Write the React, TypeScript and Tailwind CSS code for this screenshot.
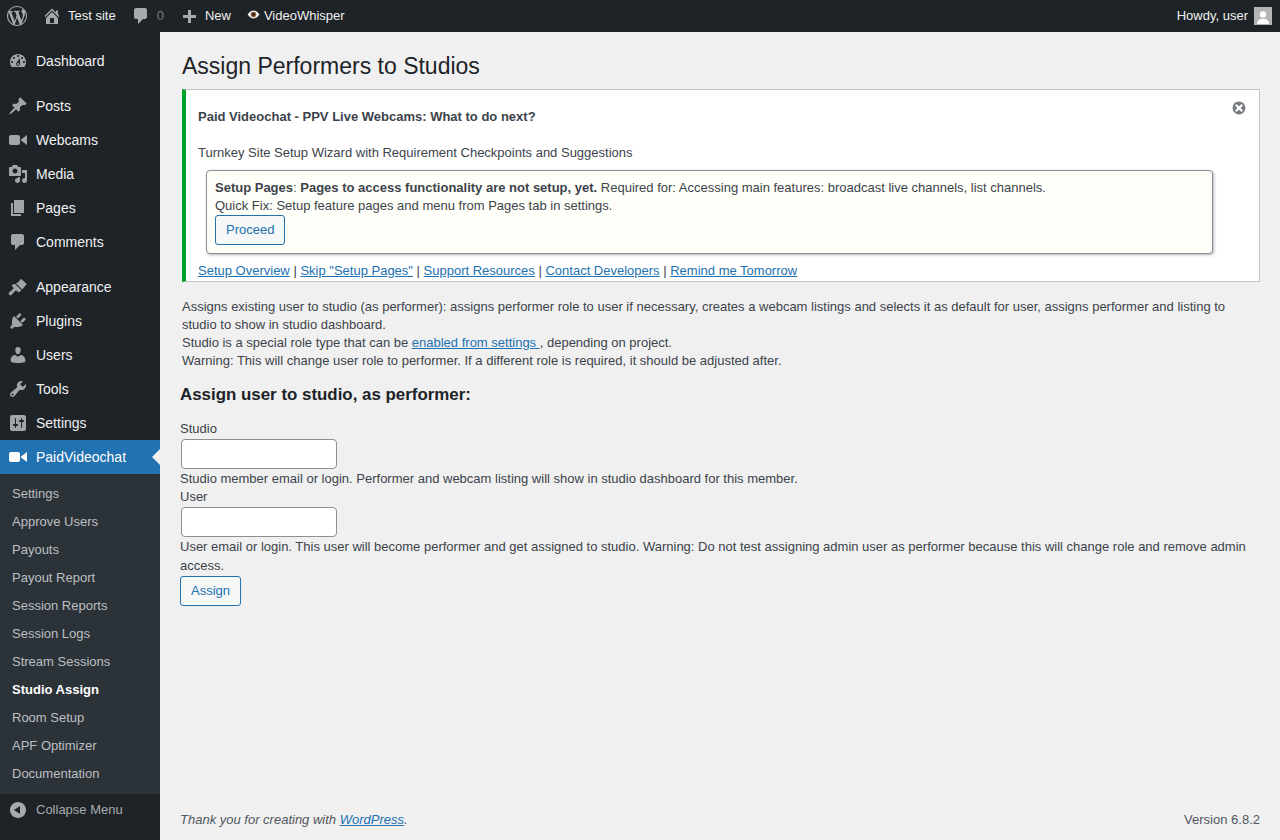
import React from "react";

const P: Record<string, string> = {
  wp: "M20 10c0-5.51-4.49-10-10-10C4.48 0 0 4.49 0 10c0 5.52 4.48 10 10 10 5.51 0 10-4.48 10-10zM7.78 15.37L4.37 6.22c.55-.02 1.17-.08 1.17-.08.5-.06.44-1.13-.06-1.11 0 0-1.45.11-2.37.11-.18 0-.37 0-.58-.01C4.12 2.69 6.87 1.11 10 1.11c2.33 0 4.45.87 6.05 2.34-.68-.11-1.65.39-1.65 1.58 0 .74.45 1.36.9 2.1.35.61.55 1.36.55 2.46 0 1.49-1.4 5-1.4 5l-3.03-8.37c.54-.02.82-.17.82-.17.5-.05.44-1.25-.06-1.22 0 0-1.44.12-2.38.12-.87 0-2.33-.12-2.33-.12-.5-.03-.56 1.2-.06 1.22l.92.08 1.26 3.41zM17.41 10c.24-.64.74-1.87.43-4.25.7 1.29 1.05 2.71 1.05 4.25 0 3.29-1.73 6.24-4.4 7.78.97-2.59 1.94-5.2 2.92-7.78zM6.1 18.09C3.12 16.65 1.11 13.53 1.11 10c0-1.3.23-2.48.72-3.59C3.25 10.3 4.67 14.2 6.1 18.09zm4.03-6.63l2.58 6.98c-.86.29-1.76.45-2.71.45-.79 0-1.57-.11-2.29-.33.81-2.38 1.62-4.74 2.42-7.1z",
  home: "M16 8.5l1.53 1.53-1.06 1.06L10 4.62l-6.47 6.47-1.06-1.06L10 2.5l4 4v-2h2v4zm-6-2.46l6 5.99V18H4v-5.97zM12 17v-5H8v5h4z",
  comment: "M5 2h9c1.1 0 2 .9 2 2v7c0 1.1-.9 2-2 2h-2l-5 5v-5H5c-1.1 0-2-.9-2-2V4c0-1.1.9-2 2-2z",
  plus: "M16 9v3h-5v5H8v-5H3V9h5V4h3v5z",
  dashboard: "M3.76 16h12.48c1.1-1.37 1.76-3.11 1.76-5 0-4.42-3.58-8-8-8s-8 3.58-8 8c0 1.89.66 3.63 1.76 5zM10 4c.55 0 1 .45 1 1s-.45 1-1 1-1-.45-1-1 .45-1 1-1zM6 6c.55 0 1 .45 1 1s-.45 1-1 1-1-.45-1-1 .45-1 1-1zm8 0c.55 0 1 .45 1 1s-.45 1-1 1-1-.45-1-1 .45-1 1-1zm-5.37 5.55L12 7v6c0 1.1-.9 2-2 2s-2-.9-2-2c0-.57.24-1.08.63-1.45zM4 10c.55 0 1 .45 1 1s-.45 1-1 1-1-.45-1-1 .45-1 1-1zm12 0c.55 0 1 .45 1 1s-.45 1-1 1-1-.45-1-1 .45-1 1-1zm-5 3c0-.55-.45-1-1-1s-1 .45-1 1 .45 1 1 1 1-.45 1-1z",
  post: "M10.44 3.02l1.82-1.82 6.36 6.35-1.83 1.82c-1.05-.68-2.48-.57-3.41.36l-.75.75c-.92.93-1.04 2.35-.35 3.41l-1.83 1.82-2.41-2.41-2.8 2.79c-.42.42-3.38 2.71-3.8 2.29s1.86-3.39 2.28-3.81l2.79-2.79L4.1 9.36l1.83-1.82c1.05.69 2.48.57 3.4-.36l.75-.75c.93-.92 1.05-2.35.36-3.41z",
  video: "M12 13V7c0-1.1-.9-2-2-2H3c-1.1 0-2 .9-2 2v6c0 1.1.9 2 2 2h7c1.1 0 2-.9 2-2zm1-2.5l6 4.5V5l-6 4.5v1z",
  media: "M13 11V4c0-.55-.45-1-1-1h-1.67L9 1H5L3.67 3H2c-.55 0-1 .45-1 1v7c0 .55.45 1 1 1h10c.55 0 1-.45 1-1zM7 4.5c1.38 0 2.5 1.12 2.5 2.5S8.38 9.5 7 9.5 4.5 8.38 4.5 7 5.62 4.5 7 4.5zM14 6h5v10.5c0 1.38-1.12 2.5-2.5 2.5S14 17.88 14 16.5s1.12-2.5 2.5-2.5c.17 0 .34.02.5.05V9h-3V6zm-4 8.05V13h2v3.5c0 1.38-1.12 2.5-2.5 2.5S7 17.88 7 16.5 8.12 14 9.5 14c.17 0 .34.02.5.05z",
  page: "M6 15V2h10v13H6zm-1 1h8v2H3V5h2v11z",
  appearance: "M13 1.8l5.8 5.2-4.6 5.6-6.4-6.4c1.2-.2 2.2-.7 2.9-1.5.6-.7 1.1-1.6 2.3-2.9zM7.1 6.9l6.3 6.3-1.9 1.7c-.5.4-1.1.4-1.5 0l-1.3-1.2c-.4-.4-1-.4-1.4 0l-3.6 4c-.7.8-1.9.8-2.5.1-.7-.7-.7-1.7 0-2.4l4-3.7c.4-.4.4-1 0-1.4L4.1 9.2c-.4-.4-.4-1 0-1.4z",
  plugins: "M13.11 4.36L9.87 7.6 8 5.73l3.24-3.24c.35-.34 1.05-.2 1.56.32.52.51.66 1.21.31 1.55zm-8 1.77l.91-1.12 9.01 9.01-1.19.84c-.71.71-2.63 1.16-3.82 1.16H6.14L4.9 17.26c-.59.59-1.54.59-2.12 0-.59-.58-.59-1.53 0-2.12l1.24-1.24v-3.88c0-1.13.4-3.19 1.09-3.89zm7.26 3.97l3.24-3.24c.34-.35 1.04-.21 1.55.31.52.51.66 1.21.31 1.55l-3.24 3.25z",
  users: "M10 9.25c-2.27 0-2.73-3.44-2.73-3.44C7 4.02 7.82 2 9.97 2c2.16 0 2.98 2.02 2.71 3.81 0 0-.41 3.44-2.68 3.44zm0 2.57L12.72 10c2.39 0 4.52 2.33 4.52 4.53v2.49s-3.65 1.13-7.24 1.13c-3.65 0-7.24-1.13-7.24-1.13v-2.49c0-2.25 1.94-4.48 4.47-4.48z",
  tools: "M16.68 9.77c-1.34 1.34-3.3 1.67-4.95.99l-5.41 6.52c-.99.99-2.59.99-3.58 0s-.99-2.59 0-3.57l6.52-5.42c-.68-1.65-.35-3.61.99-4.95 1.28-1.28 3.12-1.62 4.72-1.06l-2.89 2.89 2.82 2.82 2.86-2.87c.53 1.58.18 3.39-1.08 4.65zM3.81 16.21c.4.39 1.04.39 1.43 0 .4-.4.4-1.04 0-1.43-.39-.4-1.03-.4-1.43 0-.39.39-.39 1.03 0 1.43z",
  settings: "M18 16V4c0-1.1-.9-2-2-2H4c-1.1 0-2 .9-2 2v12c0 1.1.9 2 2 2h12c1.1 0 2-.9 2-2zM8 11h1c.55 0 1 .45 1 1s-.45 1-1 1H8v1.5c0 .28-.22.5-.5.5s-.5-.22-.5-.5V13H6c-.55 0-1-.45-1-1s.45-1 1-1h1V5.5c0-.28.22-.5.5-.5s.5.22.5.5V11zm5-2h-1c-.55 0-1-.45-1-1s.45-1 1-1h1V5.5c0-.28.22-.5.5-.5s.5.22.5.5V7h1c.55 0 1 .45 1 1s-.45 1-1 1h-1v5.5c0 .28-.22.5-.5.5s-.5-.22-.5-.5V9z",
  dismiss: "M10 2c4.42 0 8 3.58 8 8s-3.58 8-8 8-8-3.58-8-8 3.58-8 8-8zm5 11l-3-3 3-3-2-2-3 3-3-3-2 2 3 3-3 3 2 2 3-3 3 3z",
  collapse: "M10 2c4.42 0 8 3.58 8 8s-3.58 8-8 8-8-3.58-8-8 3.58-8 8-8zm2 12V6l-6 4z",
};

function Ico({ n, className }: { n: string; className: string }) {
  return (
    <svg viewBox="0 0 20 20" fill="currentColor" className={className} aria-hidden="true">
      <path d={P[n]} fillRule="evenodd" />
    </svg>
  );
}

function MenuItem({ icon, label, active, gap }: { icon: string; label: string; active?: boolean; gap?: boolean }) {
  return (
    <div
      className={`relative flex h-[34px] items-center ${gap ? "mt-[11px]" : ""} ${
        active ? "bg-[#2271b1] text-white" : "text-[#f0f0f1]"
      }`}
    >
      <span className="w-[36px] shrink-0 pl-[8px]">
        <Ico n={icon} className={`h-[20px] w-[20px] ${active ? "text-white" : "text-[#a2a5a7]"}`} />
      </span>
      <span className="text-[14px]">{label}</span>
      {active && (
        <span className="absolute right-0 top-[9px] h-0 w-0 border-y-[8px] border-r-[8px] border-y-transparent border-r-[#f0f0f1]" />
      )}
    </div>
  );
}

const subItems = [
  "Settings",
  "Approve Users",
  "Payouts",
  "Payout Report",
  "Session Reports",
  "Session Logs",
  "Stream Sessions",
  "Studio Assign",
  "Room Setup",
  "APF Optimizer",
  "Documentation",
];

function Btn({ children }: { children: React.ReactNode }) {
  return (
    <button className="block h-[30px] rounded-[3px] border border-[#2271b1] bg-[#f6f7f7] px-[10px] text-[13px] text-[#2271b1]">
      {children}
    </button>
  );
}

function Input() {
  return <input className="mx-px block h-[30px] w-[156px] rounded-[4px] border border-[#8c8f94] bg-white" />;
}

function A({ children }: { children: React.ReactNode }) {
  return <a className="cursor-pointer text-[#2271b1] underline">{children}</a>;
}

export default function App() {
  return (
    <div className="flex h-[840px] w-[1280px] flex-col overflow-hidden bg-[#f0f0f1] font-['Liberation_Sans',Arial,sans-serif] text-[13px] leading-[18px] text-[#3c434a]">
      <header className="flex h-[32px] shrink-0 items-center bg-[#1d2327] text-[13px] text-[#f0f0f1]">
        <Ico n="wp" className="ml-[7px] h-[20px] w-[20px] text-[#a7aaad]" />
        <Ico n="home" className="ml-[15px] h-[20px] w-[20px] text-[#a7aaad]" />
        <span className="ml-[6px]">Test site</span>
        <Ico n="comment" className="ml-[15px] h-[20px] w-[20px] text-[#a7aaad]" />
        <span className="ml-[6px] text-[#787c82]">0</span>
        <Ico n="plus" className="ml-[16px] h-[20px] w-[20px] text-[#a7aaad]" />
        <span className="ml-[5px]">New</span>
        <svg viewBox="0 0 14 10" className="-mt-[3px] ml-[16px] h-[9px] w-[13px]" aria-hidden="true">
          <path d="M0.5 5C2.5 1.8 4.7.6 7 .6s4.5 1.2 6.5 4.4C11.5 8.2 9.3 9.4 7 9.4S2.5 8.2.5 5z" fill="#f4f1ee" />
          <circle cx="7" cy="5" r="3" fill="#8a5a35" />
          <circle cx="7" cy="5" r="1.4" fill="#1b1410" />
        </svg>
        <span className="ml-[4px]">VideoWhisper</span>
        <span className="ml-auto">Howdy, user</span>
        <span className="ml-[6px] mr-[8px] flex h-[18px] w-[18px] items-end justify-center overflow-hidden border border-[#b4b4b4] bg-[#b4b4b4]">
          <svg viewBox="0 0 16 16" className="h-[16px] w-[16px]" aria-hidden="true">
            <circle cx="8" cy="6.4" r="3.2" fill="#fff" />
            <path d="M2 16c0-3.5 2.5-5 4.5-5.3h3c2 .3 4.5 1.8 4.5 5.3z" fill="#fff" />
          </svg>
        </span>
      </header>

      <div className="flex min-h-0 flex-1">
        <aside className="w-[160px] shrink-0 bg-[#1d2327] pt-[12px]">
          <MenuItem icon="dashboard" label="Dashboard" />
          <MenuItem icon="post" label="Posts" gap />
          <MenuItem icon="video" label="Webcams" />
          <MenuItem icon="media" label="Media" />
          <MenuItem icon="page" label="Pages" />
          <MenuItem icon="comment" label="Comments" />
          <MenuItem icon="appearance" label="Appearance" gap />
          <MenuItem icon="plugins" label="Plugins" />
          <MenuItem icon="users" label="Users" />
          <MenuItem icon="tools" label="Tools" />
          <MenuItem icon="settings" label="Settings" />
          <MenuItem icon="video" label="PaidVideochat" active />
          <div className="bg-[#2c3338] py-[6px]">
            {subItems.map((s) => (
              <div
                key={s}
                className={`flex h-[28px] items-center pl-[12px] text-[13px] ${
                  s === "Studio Assign" ? "font-bold text-white" : "text-[#bcbfc2]"
                }`}
              >
                {s}
              </div>
            ))}
          </div>
          <div className="flex h-[32px] items-center text-[13px] text-[#a7aaad]">
            <span className="w-[36px] shrink-0 pl-[8px]">
              <Ico n="collapse" className="h-[20px] w-[20px] text-[#a7aaad]" />
            </span>
            Collapse Menu
          </div>
        </aside>

        <main className="flex min-w-0 flex-1 flex-col px-[20px]">
          <h1 className="ml-[2px] mt-[19px] text-[23px] font-normal leading-[30px] text-[#1d2327]">
            Assign Performers to Studios
          </h1>
          <div className="relative ml-[2px] mt-[8px] border border-l-4 border-[#c3c4c7] border-l-[#00a32a] bg-white pb-px pl-[12px] pt-[18px]">
            <button className="absolute right-[12px] top-[10px] text-[#787c82]" aria-label="Dismiss">
              <Ico n="dismiss" className="h-[16px] w-[16px]" />
            </button>
            <div className="font-bold">Paid Videochat - PPV Live Webcams: What to do next?</div>
            <div className="mt-[18px]">Turnkey Site Setup Wizard with Requirement Checkpoints and Suggestions</div>
            <div className="ml-[8px] mr-[46px] mt-[8px] rounded-[4px] border border-[#8c8f94] bg-[#fffffa] px-[8px] pb-[8px] pt-[8px] shadow-[1px_1px_3px_rgba(0,0,0,0.3)]">
              <div>
                <b>Setup Pages</b>: <b>Pages to access functionality are not setup, yet.</b> Required for: Accessing main features: broadcast live channels, list channels.
              </div>
              <div>Quick Fix: Setup feature pages and menu from Pages tab in settings.</div>
              <Btn>Proceed</Btn>
            </div>
            <div className="mt-[8px]">
              <A>Setup Overview</A> | <A>Skip "Setup Pages"</A> | <A>Support Resources</A> | <A>Contact Developers</A> | <A>Remind me Tomorrow</A>
            </div>
          </div>

          <div className="ml-[2px] mt-[16px]">
            <div>
              Assigns existing user to studio (as performer): assigns performer role to user if necessary, creates a webcam listings and selects it as default for user, assigns performer and listing to studio to show in studio dashboard.
            </div>
            <div>
              Studio is a special role type that can be <A>enabled from settings </A>, depending on project.
            </div>
            <div>Warning: This will change user role to performer. If a different role is required, it should be adjusted after.</div>
          </div>

          <h3 className="mt-[13px] text-[16.9px] font-bold leading-[24px] text-[#1d2327]">Assign user to studio, as performer:</h3>

          <div className="mt-[13px]">Studio</div>
          <div className="mt-px">
            <Input />
          </div>
          <div className="pt-px">Studio member email or login. Performer and webcam listing will show in studio dashboard for this member.</div>
          <div>User</div>
          <div className="mt-px">
            <Input />
          </div>
          <div className="leading-[19px]">
            User email or login. This user will become performer and get assigned to studio. Warning: Do not test assigning admin user as performer because this will change role and remove admin access.
          </div>
          <div className="mt-px">
            <Btn>Assign</Btn>
          </div>

          <footer className="mt-auto flex justify-between pb-[11px] text-[13px] text-[#50575e]">
            <span className="italic">
              Thank you for creating with <A>WordPress</A>.
            </span>
            <span>Version 6.8.2</span>
          </footer>
        </main>
      </div>
    </div>
  );
}
